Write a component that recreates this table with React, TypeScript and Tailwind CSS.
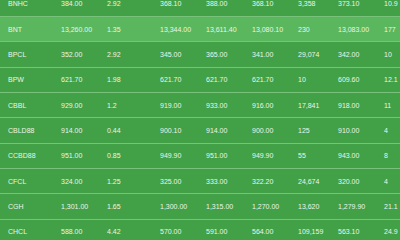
import React from "react";

const rows: string[][] = [
  ["BNHC", "384.00", "2.92", "368.10", "388.00", "368.10", "3,358", "373.10", "10.9"],
  ["BNT", "13,260.00", "1.35", "13,344.00", "13,611.40", "13,080.10", "230", "13,083.00", "177"],
  ["BPCL", "352.00", "2.92", "345.00", "365.00", "341.00", "29,074", "342.00", "10"],
  ["BPW", "621.70", "1.98", "621.70", "621.70", "621.70", "10", "609.60", "12.1"],
  ["CBBL", "929.00", "1.2", "919.00", "933.00", "916.00", "17,841", "918.00", "11"],
  ["CBLD88", "914.00", "0.44", "900.10", "914.00", "900.00", "125", "910.00", "4"],
  ["CCBD88", "951.00", "0.85", "949.90", "951.00", "949.90", "55", "943.00", "8"],
  ["CFCL", "324.00", "1.25", "325.00", "333.00", "322.20", "24,674", "320.00", "4"],
  ["CGH", "1,301.00", "1.65", "1,300.00", "1,315.00", "1,270.00", "13,620", "1,279.90", "21.1"],
  ["CHCL", "588.00", "4.42", "570.00", "591.00", "564.00", "109,159", "563.10", "24.9"],
];

export default function App() {
  return (
    <div className="w-[400px] h-[240px] overflow-hidden bg-[#42a047]">
      <div className="-mt-[8.4px] text-[7px] text-[#eaf5ea] font-['Liberation_Sans',Arial,sans-serif]">
        {rows.map((r, i) => (
          <div
            key={i}
            className={`grid grid-cols-[53px_46px_53px_46px_46px_46px_40px_46px_1fr] items-center h-[25.33px] border-b border-[#78c27b] ${
              i === 1 ? "bg-[#5ab75d]" : "bg-[#42a047]"
            }`}
          >
            {r.map((c, j) => (
              <div key={j} className="pl-[8px] whitespace-nowrap leading-none">
                {c}
              </div>
            ))}
          </div>
        ))}
      </div>
    </div>
  );
}
